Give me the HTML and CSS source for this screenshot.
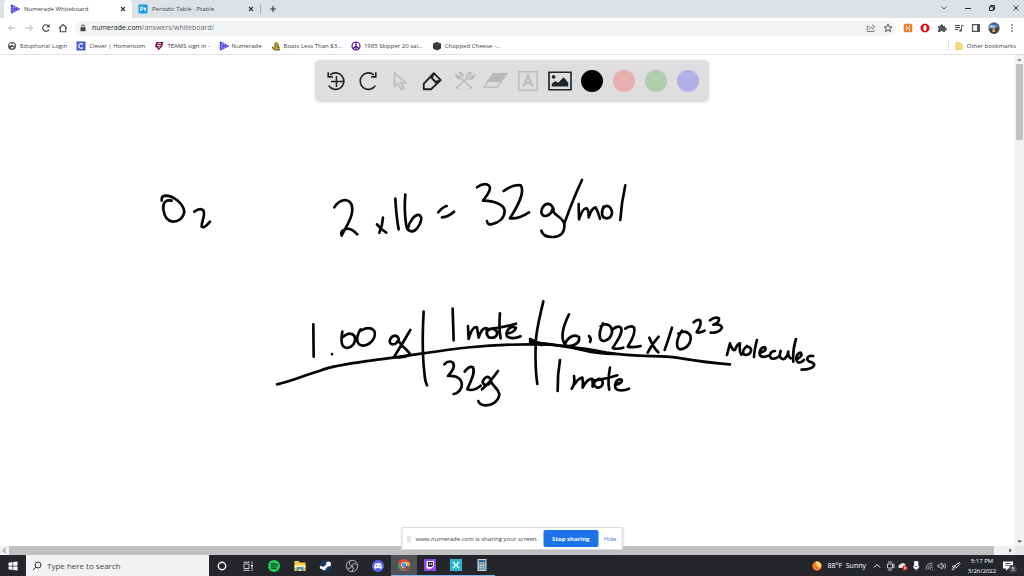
FILE: index.html
```html
<!DOCTYPE html>
<html lang="en">
<head>
<meta charset="utf-8">
<title>Numerade Whiteboard</title>
<link rel="stylesheet" href="styles.css">
</head>
<body>
<svg class="defs" aria-hidden="true">
  <symbol id="numerade" viewBox="0 0 10 10"><path d="M1.5 1v8M1.500 1l7.500 4-7.500 4M1.500 3.500l4 1.500-4 1.500" fill="#c3bff8" stroke="#4a43e0" stroke-width="1.500" stroke-dasharray="2 .5"/></symbol>
  <symbol id="close" viewBox="0 0 8 8"><path d="M2 2l4 4M6 2l-4 4" fill="none" stroke="#333" stroke-width="1.100"/></symbol>
</svg>

<header class="browser">
  <div class="tabs">
    <div class="tab active"><svg class="i10"><use href="#numerade"/></svg><span>Numerade Whiteboard</span><button class="icon" aria-label="Close tab"><svg class="i8"><use href="#close"/></svg></button></div>
    <div class="tab"><svg class="i10" viewBox="0 0 10 10"><rect x=".5" y=".5" width="9" height="9" rx="1" fill="#1296e8"/><path d="M2.800 7.500V3h1.200a1.200 1.200 0 0 1 0 2.500H2.800M7 3v4h1M6 4.500h2" fill="none" stroke="#fff"/></svg><span>Periodic Table - Ptable</span><button class="icon" aria-label="Close tab"><svg class="i8"><use href="#close"/></svg></button></div>
    <button class="icon new-tab" aria-label="New tab"><svg class="i8" viewBox="0 0 8 8"><path d="M4 1v6M1 4h6" stroke="#333" stroke-width="1.100"/></svg></button>
    <div class="window-buttons">
      <button class="icon" aria-label="Search tabs"><svg class="i8" viewBox="0 0 8 8"><path d="M1.500 2.500L4 5l2.500-2.500" fill="none" stroke="#555"/></svg></button>
      <button class="icon" aria-label="Minimize"><svg class="i8" viewBox="0 0 8 8"><path d="M1 4.500h6" stroke="#333"/></svg></button>
      <button class="icon" aria-label="Restore"><svg class="i8" viewBox="0 0 8 8"><path d="M2.500 2.500V1.500h4v4h-1M1.500 2.800h3.800v3.700H1.500z" fill="none" stroke="#222"/></svg></button>
      <button class="icon" aria-label="Close window"><svg class="i8" viewBox="0 0 8 8"><path d="M1.500 1.500l5 5M6.500 1.500l-5 5" stroke="#333"/></svg></button>
    </div>
  </div>

  <div class="nav">
    <button class="icon" aria-label="Back"><svg class="i10" viewBox="0 0 10 10"><path d="M8.500 5h-7M4.500 2l-3 3 3 3" fill="none" stroke="#b5b5b5"/></svg></button>
    <button class="icon" aria-label="Forward"><svg class="i10" viewBox="0 0 10 10"><path d="M1.500 5h7M5.500 2l3 3-3 3" fill="none" stroke="#b5b5b5"/></svg></button>
    <button class="icon" aria-label="Reload"><svg class="i10" viewBox="0 0 10 10"><path d="M8 6.500A3.300 3.300 0 1 1 7.600 3" fill="none" stroke="#444" stroke-width="1.200"/><path d="M8.600 1v3.500H5.300z" fill="#444"/></svg></button>
    <button class="icon" aria-label="Home"><svg class="i10" viewBox="0 0 10 10"><path d="M1 5.300L5 1.500l4 3.800M2.300 4.500v4.300h5.400V4.500" fill="none" stroke="#444" stroke-width="1.100"/></svg></button>
    <div class="address">
      <svg class="i8" viewBox="0 0 8 8"><rect x="1.500" y="3.200" width="5" height="4" rx=".5" fill="#444"/><path d="M2.700 3.500V2.200a1.300 1.300 0 0 1 2.600 0v1.300" fill="none" stroke="#444" stroke-width=".9"/></svg>
      <span class="url"><b>numerade.com</b>/answers/whiteboard/</span>
      <button class="icon" aria-label="Share"><svg class="i10" viewBox="0 0 10 10"><path d="M3.500 3.500H1.200v5h6.600V6.500M3 6.800Q3.500 4 6.500 3.800M6 1.600l2.800 2.200L6 6" fill="none" stroke="#666" stroke-width=".8"/></svg></button>
      <button class="icon" aria-label="Bookmark"><svg class="i10" viewBox="0 0 10 10"><path d="M5 1.200l1.100 2.600 2.800.2-2.100 1.800.7 2.800L5 7.100 2.500 8.600l.7-2.800L1.100 4l2.800-.2z" fill="none" stroke="#444" stroke-width=".9"/></svg></button>
    </div>
    <div class="extensions">
      <svg class="i10" viewBox="0 0 10 10"><rect x=".7" y=".7" width="8.600" height="8.600" rx="1.500" fill="#f47a2b"/><path d="M3.500 2.500v2l3 1.500v2M6.500 2.500v2M3.500 5.500v2" stroke="#fff" stroke-width=".9" fill="none"/></svg>
      <svg class="i10" viewBox="0 0 10 10"><path d="M3.200.7h3.600l2.500 2.500v3.600L6.800 9.300H3.200L.7 6.800V3.200z" fill="#dd1010"/><path d="M3.600 5V3h.8V2h1v.8h1V7L5.300 8H4.400L3 5.500z" fill="#fff"/></svg>
      <svg class="i10" viewBox="0 0 10 10"><path d="M1 3h2.500a1.300 1.300 0 1 1 2.500 0h2v2a1.300 1.300 0 1 1 0 2.400V9H5.800a1.200 1.200 0 0 0-2.400 0H1V6.800a1.200 1.200 0 0 0 0-2.300z" fill="#505359"/></svg>
      <svg class="i10" viewBox="0 0 10 10"><path d="M1 2.500h5M1 4.500h5M1 6.500h3M7.500 7.500V2.500h2" fill="none" stroke="#505359"/><circle cx="6.500" cy="7.500" r="1.200" fill="#505359"/></svg>
      <svg class="i10" viewBox="0 0 10 10"><path d="M1.500 1.700h7v6.600h-7z" fill="none" stroke="#505359" stroke-width="1.200"/><path d="M6 1.500h3v7H6z" fill="#505359"/></svg>
      <svg class="i12" viewBox="0 0 12 12"><circle cx="6" cy="6" r="5.700" fill="#4d6589"/><path d="M2 3h4l3 1-1 2H1z" fill="#8fb7e8"/><path d="M1 8l3-2 3 1 1-3 3 4-2 3-3 1-3-1z" fill="#4a4234"/><path d="M5 6l2 1v3H4z" fill="#c0a878"/></svg>
      <svg class="i10" viewBox="0 0 10 10"><path d="M5 1.300v1.500M5 4.300v1.500M5 7.300v1.500" stroke="#444" stroke-width="1.400"/></svg>
    </div>
  </div>

  <nav class="bookmarks">
    <a href="#"><svg class="i10" viewBox="0 0 10 10"><circle cx="5" cy="5" r="4" fill="#55585c"/><path d="M2 3l2-1 1 1.500-2 1.500zM6 2l2 2-1 1-2-1zM4 6h3L5 8.300z" fill="#fff"/></svg>Eduphoria! Login</a>
    <a href="#"><svg class="i10" viewBox="0 0 10 10"><path d="M.5.500h9v9h-9z" fill="#4454d8"/><path d="M6.800 3.500a2.300 2.300 0 1 0 0 3" fill="none" stroke="#fff" stroke-width="1.200"/></svg>Clever | Homeroom</a>
    <a href="#"><svg class="i10" viewBox="0 0 10 10"><path d="M2 1h7.500L8 6 4 9.500 3.500 7 1 6z" fill="#7b1848"/><path d="M3.500 2.500H7M3 4.500h3.500L4.500 7" stroke="#f5d5e2" fill="none"/></svg>TEAMS sign in -</a>
    <a href="#"><svg class="i10"><use href="#numerade"/></svg>Numerade</a>
    <a href="#"><svg class="i10" viewBox="0 0 10 10"><path d="M4 1h3v3l2 2v3H2L1 6l3-1z" fill="#c9a42b"/><path d="M1 6l3 3h5M4 2v4M7 3v4" stroke="#4b4935" stroke-width=".9" fill="none"/></svg>Boats Less Than $3...</a>
    <a href="#"><svg class="i10" viewBox="0 0 10 10"><circle cx="5" cy="5" r="4" fill="#fff" stroke="#57148c" stroke-width="1.200"/><path d="M5 1v8M5 5L2 7.800M5 5l3 2.800" stroke="#57148c" stroke-width="1.200"/></svg>1985 Skipper 20 sai...</a>
    <a href="#"><svg class="i10" viewBox="0 0 10 10"><path d="M1 2.500L5 1l4 1.500v5L5 9.500l-4-2z" fill="#333"/><path d="M1 2.500l4 1.500 4-1.500M5 4v5" stroke="#666" fill="none" stroke-width=".5"/></svg>Chopped Cheese -...</a>
    <a href="#" class="other"><svg class="i10" viewBox="0 0 10 10"><path d="M2 1.500h3l.5 1H8v6H2z" fill="#f8db76" stroke="#e5be42" stroke-width=".6"/></svg>Other bookmarks</a>
  </nav>
</header>

<main class="page">
  <svg class="ink" viewBox="0 55 1015 491" preserveAspectRatio="xMidYMin meet" role="img" aria-label="O2: 2 × 16 = 32 g/mol. 1.00 g, 1 mole over 32 g, 6.022 × 10^23 molecules over 1 mole">
    <g transform="translate(150 170) scale(.3333)">
      <path d="M35 92Q34 78 46 77C70 77 100 100 103 125C100 145 85 156 68 155C50 153 43 140 40 118C38 100 45 88 65 92"/>
      <path d="M133 125Q150 112 160 121C168 135 153 158 155 170Q162 177 180 155"/>
      <path d="M553 112Q565 92 585 90C612 92 610 125 600 148C592 168 582 182 575 197Q568 183 590 176Q605 175 622 193"/>
      <path d="M681 163Q694 180 709 188M699 143Q698 165 688 188M736 86Q739 140 746 178"/>
      <path d="M766 74Q762 120 768 160C770 190 792 188 802 174C812 160 820 146 810 136C796 128 778 155 774 174"/>
    </g>
    <g transform="translate(430 170) scale(.3333)">
      <path d="M25 127Q36 112 50 108M36 142Q55 141 72 125"/>
      <path d="M141 52Q155 40 170 43C192 50 172 75 159 92C195 92 222 105 224 122C224 145 205 158 185 163Q172 165 171 153"/>
      <path d="M221 63Q250 42 272 46C286 65 265 105 240 145Q265 148 297 127"/>
      <path d="M371 120C365 98 348 96 338 112C328 132 340 142 354 136Q366 128 367 118C372 138 398 140 403 162C405 190 390 200 370 201C350 202 338 196 334 182"/>
      <path d="M456 30Q430 85 404 158M446 102L447 148Q459 112 470 115Q477 120 476 142Q486 112 497 112Q504 125 510 146"/>
      <path d="M521 110C512 130 515 144 530 145C546 144 550 128 542 115C535 105 526 105 520 115M586 46Q574 100 571 150"/>
    </g>
    <g transform="translate(270 295) scale(.3333)">
      <path d="M21 268C70 258 105 240 150 227C200 208 270 202 330 193C480 175 590 148 780 148L840 149"/>
      <path d="M130 88L131 185M186 177v1"/>
      <path d="M217 110C212 140 214 157 230 159C250 158 260 138 253 122Q238 108 219 126M272 103C255 130 260 150 278 152C302 150 320 128 313 108Q300 92 274 106"/>
      <path d="M386 130C378 116 362 122 359 138C360 154 380 150 386 133C385 150 410 158 420 178Q400 190 372 186M421 105Q395 150 372 186"/>
      <path d="M461 50C457 120 457 180 463 230Q464 255 471 271M548 41L551 136"/>
      <path d="M594 93L596 132Q607 92 621 97L626 128Q636 96 650 100Q650 125 658 128C638 112 660 98 672 102C690 112 680 130 662 128M690 55Q686 100 692 130M650 103Q700 98 738 86M710 116Q735 112 738 98C720 90 705 110 711 124Q728 135 752 124"/>
      <path d="M820 19C806 80 797 110 797 150Q795 220 802 267M781 136Q800 143 815 150"/>
      <path d="M523 208Q535 195 548 202C558 215 545 230 534 243C565 240 578 255 575 275Q567 295 551 297M584 230Q598 212 609 217C618 235 598 265 592 283Q610 290 632 272"/>
      <path d="M660 250C652 240 640 250 638 262C646 278 660 268 662 257C667 275 686 278 688 300C684 320 665 332 645 331Q628 330 625 318M684 228Q660 262 636 283"/>
    </g>
    <g transform="translate(530 295) scale(.3333)">
      <path d="M0 140C60 150 150 155 230 173C320 188 390 180 440 188C500 198 550 205 600 208"/>
      <path d="M0 132L30 146Q110 152 160 166Q210 178 258 177"/>
      <path d="M117 58C96 100 92 135 108 152C128 156 152 144 147 126C128 112 106 136 104 153M177 123Q186 132 180 141"/>
      <path d="M219 85C204 115 207 137 222 138C242 134 250 112 244 98Q232 80 212 94M247 104Q262 91 272 97C282 110 262 137 248 159Q260 164 280 158M286 101Q300 90 312 97C318 112 304 138 293 155Q310 159 332 153"/>
      <path d="M358 128Q370 158 385 172M386 125Q365 148 353 173M426 98Q415 135 404 165M456 107C437 133 438 160 450 163C472 162 486 140 481 122Q470 102 445 116"/>
      <path d="M491 82Q504 70 511 77C515 90 506 103 500 112Q510 115 524 107M540 76Q555 64 567 70C568 80 560 86 550 89Q574 86 576 98C570 110 555 114 542 113"/>
      <path d="M600 145L591 180M600 147Q609 169 615 165Q622 145 630 145Q627 170 634 179M651 153C635 165 637 181 648 180C665 178 670 157 651 154M681 135Q673 165 672 186M689 173Q712 168 705 157C690 155 683 180 696 185Q704 187 715 182M735 168C720 168 716 184 724 190Q734 194 745 185M752 168C746 186 752 194 763 192Q773 185 775 170Q773 184 782 190M798 132Q787 170 790 200M802 192Q820 182 812 173C798 175 795 196 804 202Q812 205 822 195M850 183C830 180 828 194 838 200C862 204 857 222 815 224"/>
      <path d="M90 195Q82 240 83 288M132 243Q136 267 125 281Q144 248 157 248Q160 260 158 278Q172 250 188 252L188 275C195 252 210 245 218 260C220 278 200 284 193 270M240 218Q232 260 238 284M188 257Q220 254 262 241M255 270Q279 264 275 254C258 248 248 276 262 284Q278 289 297 281"/>
    </g>
  </svg>

  <div class="tools" role="toolbar" aria-label="Drawing tools">
    <button class="icon" aria-label="Undo"><svg viewBox="0 0 24 24"><path d="M5.500 5.500A9 9 0 1 1 4 17M3.500 2.500v5h5M12.500 6.500v12M6.500 12.500h15" fill="none" stroke="#222" stroke-width="1.700"/></svg></button>
    <button class="icon" aria-label="Redo"><svg viewBox="0 0 24 24"><path d="M18.500 5.500A9 9 0 1 0 20 17M20.500 2.500v5h-5" fill="none" stroke="#222" stroke-width="1.700"/></svg></button>
    <button class="icon" aria-label="Select"><svg viewBox="0 0 24 24"><path d="M6 3v15l4-3 3 6.500 3-1.500-3-6h5z" fill="none" stroke="#bcbcbc" stroke-width="1.700"/></svg></button>
    <button class="icon" aria-label="Pen"><svg viewBox="0 0 24 24"><path d="M3 21v-6L14 3.500 21.500 11 11 21zM10.500 7.500L17.500 15M14 3.500l-2 5.500 4 4 5.500-2" fill="none" stroke="#222" stroke-width="2" stroke-linejoin="round"/></svg></button>
    <button class="icon" aria-label="Tools"><svg viewBox="0 0 24 24"><path d="M8 8l12 12M16 8L4 20M3 5l3 3 3-3-2-2c4 0 5 4 2 6-3 1-6 0-6-4zM15 7c0-4 3-5 5-4l-2 3 2 2 3-2c0 4-4 5-6 3zM3 18l3 3M18 21l3-3" fill="none" stroke="#b8b8b8" stroke-width="1.500"/></svg></button>
    <button class="icon" aria-label="Eraser"><svg viewBox="0 0 24 24"><path d="M9 4h15l-8 9H1z" fill="#b9b9b9"/><path d="M9 4h15L13 19H-1z" fill="none" stroke="#bbb" stroke-width="1.500"/></svg></button>
    <button class="icon" aria-label="Text"><svg viewBox="0 0 24 24"><path d="M2 2h20v20H2z" fill="none" stroke="#bcbcbc" stroke-width="1.600"/><path d="M7 18l5-12 5 12M8.500 14h7" fill="none" stroke="#bcbcbc" stroke-width="2.400"/></svg></button>
    <button class="icon" aria-label="Image"><svg viewBox="0 0 24 24"><path d="M0 2.500h24v19H0z" fill="none" stroke="#20252a" stroke-width="1.800"/><circle cx="5" cy="7.500" r="2" fill="#20252a"/><path d="M3 18v-3l4-3 3 2 6-6 5 6v4z" fill="#20252a"/></svg></button>
    <button class="icon swatch black" aria-label="Black"></button>
    <button class="icon swatch red" aria-label="Red"></button>
    <button class="icon swatch green" aria-label="Green"></button>
    <button class="icon swatch blue" aria-label="Blue"></button>
  </div>

  <div class="vscroll"><svg class="arrow" viewBox="0 0 8 8"><path d="M2 5l2-2 2 2z" fill="#777"/></svg><div class="vtrack"><div class="thumb"></div></div><svg class="arrow" viewBox="0 0 8 8"><path d="M2 3l2 2 2-2z" fill="#444"/></svg></div>
  <div class="hscroll"><svg class="arrow" viewBox="0 0 8 8"><path d="M5 2L3 4l2 2" fill="none" stroke="#999"/></svg><div class="thumb"></div><svg class="arrow" viewBox="0 0 8 8"><path d="M3 2l2 2-2 2z" fill="#444"/></svg></div>
  <div class="corner"></div>

  <div class="sharing"><span class="grip"></span><span>www.numerade.com is sharing your screen.</span><button class="stop">Stop sharing</button><a href="#">Hide</a></div>
</main>

<footer class="taskbar">
  <button class="icon start" aria-label="Start"><svg class="i10" viewBox="0 0 10 10"><path d="M.5 1.800L4.500 1v3.700h-4zM5.200 1L9.500.500v4.200H5.200zM.5 5.400h4V9l-4-.7zM5.200 5.400h4.300v4.200L5.200 9z" fill="#fff"/></svg></button>
  <label class="search"><svg class="i10" viewBox="0 0 10 10"><circle cx="6" cy="4" r="3" fill="none" stroke="#333"/><path d="M4 6L1 9" stroke="#333"/></svg><input type="text" placeholder="Type here to search" aria-label="Search"></label>
  <div class="apps">
    <button class="icon" aria-label="Cortana"><svg viewBox="0 0 14 14"><circle cx="7" cy="7" r="3.700" fill="none" stroke="#fff" stroke-width="1.400"/></svg></button>
    <button class="icon" aria-label="Task view"><svg viewBox="0 0 14 14"><path d="M3 5h5v4.500H3zM3 3.500V2.500M8 3.500V2.500M3 12v-1M8 12v-1M3 3.200h5M3 11.300h5M11 2.500v3M11 8v4" fill="none" stroke="#ddd" stroke-width=".9"/><path d="M10 6h2v1.500h-2z" fill="#fff"/></svg></button>
    <button class="icon" aria-label="Spotify"><svg viewBox="0 0 14 14"><circle cx="7" cy="7" r="6" fill="#1fce5a"/><path d="M3.500 5.200q4-1 7.500.8M4 7.300q3.500-.8 6 .7M4.300 9.300q3-.6 5 .5" fill="none" stroke="#17351f" stroke-width="1.200"/></svg></button>
    <button class="icon" aria-label="File Explorer"><svg viewBox="0 0 14 14"><path d="M1.500 2h4l1 1.500h6V12h-11z" fill="#f8cf50"/><path d="M1.500 6h11v3h-11z" fill="#ffe691"/><path d="M3.500 8h7v4h-2v-2h-3v2h-2z" fill="#3b9bd0"/></svg></button>
    <button class="icon" aria-label="Steam"><svg viewBox="0 0 14 14"><circle cx="7" cy="7" r="6" fill="#133b65"/><path d="M1 8l4 1.500L9 5.500" fill="none" stroke="#fff" stroke-width="2.500"/><circle cx="9.500" cy="5" r="2.500" fill="#fff"/><circle cx="5" cy="9.500" r="1.800" fill="#fff"/></svg></button>
    <button class="icon" aria-label="OBS"><svg viewBox="0 0 14 14"><circle cx="7" cy="7" r="5.700" fill="#26272b" stroke="#bbb" stroke-width=".9"/><path d="M7 7Q3 6 5 2.500M7 7q1-4 4.500-1.500M7 7q3 3 0 5M7 7Q5 11 2.500 9" fill="none" stroke="#bbb"/></svg></button>
    <button class="icon" aria-label="Discord"><svg viewBox="0 0 14 14"><circle cx="7" cy="7" r="6" fill="#5765ec"/><path d="M4 4.500q3-1 6 0l1 4.500-2 1-.7-1H5.700L5 10 3 9z" fill="#fff"/><path d="M5.500 6.200v1.300M8.500 6.200v1.300" stroke="#5765ec" stroke-width="1.200"/></svg></button>
    <button class="icon open current" aria-label="Chrome"><svg viewBox="0 0 14 14"><circle cx="7" cy="7" r="6" fill="#e7483b"/><path d="M1.500 4.500L6 12.800A6 6 0 0 1 1.500 4.500z" fill="#33a853"/><path d="M7 4h5.200A6 6 0 0 1 7 13l2.500-4z" fill="#e0b33b"/><circle cx="7" cy="7" r="2.800" fill="#fff"/><circle cx="7" cy="7" r="2.200" fill="#438be9"/><circle cx="10.500" cy="10.500" r="3" fill="#765c50"/></svg></button>
    <button class="icon open" aria-label="Twitch"><svg viewBox="0 0 14 14"><path d="M1 1h12v12H1z" fill="#8e45ed"/><path d="M4 3h7v5L8.500 10.500H7L5.500 12v-1.500H3.500V4z" fill="#fff"/><path d="M5 4h5v3.500L9 8.700H5z" fill="#26153d"/><path d="M6.800 5v2M8.800 5v2" stroke="#fff"/></svg></button>
    <button class="icon open" aria-label="Drawing app"><svg viewBox="0 0 14 14"><path d="M1 1h12v12H1z" fill="#30b5c8"/><path d="M4 4l6 6M10 4l-6 6" stroke="#e8ffff" stroke-width="1.100"/></svg></button>
    <button class="icon open" aria-label="Calculator"><svg viewBox="0 0 14 14"><path d="M2.500 1h9v12h-9z" fill="#cbd4dc"/><path d="M3.500 2h7v2.500h-7z" fill="#306c95"/><path d="M4 6h1.500M6.300 6h1.500M8.700 6h1.500M4 8.500h1.500M6.300 8.500h1.500M4 11h1.500M6.300 11h1.500" stroke="#596775" stroke-width="1.500"/><path d="M8.500 7.500h2v4.500h-2z" fill="#42a2d0"/></svg></button>
  </div>
  <div class="tray">
    <span class="weather"><svg class="i10" viewBox="0 0 10 10"><circle cx="5" cy="5" r="4.700" fill="#f37b2c"/><path d="M4 .5a4.500 4.500 0 0 1 5 6Q4 7 4 .5" fill="#ffd36a"/></svg>88°F&nbsp; Sunny</span>
    <svg class="i10" viewBox="0 0 10 10"><path d="M2 6.500l3-3 3 3" fill="none" stroke="#fff"/></svg>
    <svg class="i10" viewBox="0 0 10 10"><path d="M3 1h4M2.500 3h5v4h-5zM7.500 4l1.500-1v4L7.500 6M3 9h4" fill="none" stroke="#ddd" stroke-width=".9"/></svg>
    <svg class="i10" viewBox="0 0 10 10"><path d="M1 7a2 2 0 0 1 1-3.500 3 3 0 0 1 5.500.5L9 7z" fill="#ddd"/><circle cx="7" cy="7" r="2.600" fill="#d9242c"/><path d="M6 6l2 2M8 6L6 8" stroke="#fff" stroke-width=".7"/></svg>
    <svg class="i10" viewBox="0 0 10 10"><path d="M3.500.500h3.500v5.500H3.500zM2.500 5q0 3 2.700 3t2.700-3M5.200 8v1.500" fill="#fff" stroke="#eee" stroke-width=".8"/></svg>
    <svg class="i10" viewBox="0 0 10 10"><path d="M2 8.500Q2 2 8.500 2M4 8.500Q4 4 8.500 4M6 8.500Q6 6 8.500 6M8 8.500h1" fill="none" stroke="#bbb" stroke-width=".9"/></svg>
    <svg class="i10" viewBox="0 0 10 10"><path d="M1 3.800h1.500L5 2v6L2.500 6.200H1zM6.200 3.500q1 1.500 0 3M7.700 2.300q2 2.700 0 5.400" fill="none" stroke="#ddd" stroke-width=".8"/></svg>
    <svg class="i12" viewBox="0 0 12 12"><path d="M2 7q3-3 3 0c0 4-5 3-2 1l5-5 1.500 1.500L6 8M9 2l1.500 1.500" fill="none" stroke="#ddd"/></svg>
    <time class="clock"><span>5:17 PM</span><span>3/26/2022</span></time>
    <span class="notice"><svg class="i12" viewBox="0 0 12 12"><path d="M1 1.500h10v7H6L4 11V8.500H1z" fill="#fff"/><path d="M3 3.500h6M3 5.500h6" stroke="#444" stroke-width=".8"/></svg><b>5</b></span>
  </div>
</footer>
</body>
</html>
```
FILE: styles.css
```css
* { box-sizing: border-box; }
body {
  margin: 0;
  height: 100vh;
  display: flex;
  flex-direction: column;
  overflow: hidden;
  background: #fff;
  color: #3c4043;
  font: 6px/10px "Open Sans", "Noto Sans", sans-serif;
}
button, input { font: inherit; color: inherit; border: 0; margin: 0; padding: 0; background: none; }
a { color: inherit; text-decoration: none; }
svg { display: block; flex: none; }
.defs { position: absolute; width: 0; height: 0; }
.icon { display: flex; align-items: center; justify-content: center; flex: none; }
.i8 { width: 8px; height: 8px; }
.i10 { width: 10px; height: 10px; }
.i12 { width: 12px; height: 12px; }

.tabs { display: flex; height: 18px; padding-left: 4px; background: #dee1e6; }
.tab { display: flex; align-items: center; gap: 4px; width: 128px; padding: 0 5px 0 6px; }
.tab span { flex: 1; white-space: nowrap; }
.tab.active { background: #fff; border-radius: 4px 4px 0 0; }
.new-tab { width: 24px; border-left: 1px solid #aaadb2; margin: 4px 0; }
.window-buttons { display: flex; align-items: center; gap: 16px; margin-left: auto; padding: 0 4px 3px 0; }

.nav { display: flex; align-items: center; height: 20px; padding: 0 7px; gap: 7px; }
.address { display: flex; flex: 1; align-items: center; gap: 7px; height: 15px; padding: 0 3px 0 4px; border-radius: 8px; background: #f1f3f4; }
.url { flex: 1; font-size: 7px; color: #6b6e72; margin-left: -2px; }
.url b { font-weight: 400; color: #222; }
.extensions { display: flex; align-items: center; gap: 7px; }

.bookmarks { display: flex; align-items: center; gap: 9px; height: 17px; padding: 0 8px 0 7px; border-bottom: 1px solid #e0e0e0; white-space: nowrap; }
.bookmarks a { display: flex; align-items: center; gap: 3px; }
.bookmarks .other { margin-left: auto; border-left: 1px solid #d5e1f5; padding-left: 5px; }

.page { position: relative; flex: 1; min-height: 0; display: grid; grid-template: 1fr 9px / 1fr 9px; }
.ink { width: 100%; height: 100%; min-height: 0; fill: none; stroke: #050505; stroke-width: 8; stroke-linecap: round; stroke-linejoin: round; }
.tools {
  position: absolute; top: 5px; left: 50%; transform: translateX(-50%);
  display: flex; align-items: center; gap: 10px; height: 42px; padding: 0 10px;
  border-radius: 5px; background: #dedede; box-shadow: 0 0 3px #ddd;
}
.tools .icon { width: 22px; height: 22px; }
.tools svg { width: 22px; height: 22px; overflow: visible; }
.swatch { border-radius: 50%; }
.black { background: #000; }
.red { background: #e8aeae; }
.green { background: #adcfad; }
.blue { background: #b1b1e5; }

.arrow { width: 9px; height: 9px; }
.vscroll { display: flex; flex-direction: column; background: #f1f1f1; }
.vtrack { flex: 1; padding: 0 1px; }
.thumb { background: #c1c1c1; }
.vtrack .thumb { height: 16%; }
.hscroll { display: flex; background: #f1f1f1; }
.hscroll .thumb { flex: 1; margin-right: 12px; }
.corner { background: #e6e6e6; }

.sharing {
  position: absolute; bottom: 5px; left: 50%; transform: translateX(-50%);
  display: flex; align-items: center; gap: 5px; height: 23px; padding: 0 5px;
  border: 1px solid #ddd; background: #fff; white-space: nowrap; box-shadow: 0 1px 2px #bbb;
}
.grip { width: 3px; height: 6px; border: 1px solid #ccc; border-width: 0 1px; }
.stop { height: 17px; padding: 0 9px; border-radius: 2px; background: #1a73e8; color: #fff; font-weight: 700; }
.sharing a { color: #3c7fe0; }

.taskbar { display: flex; height: 21px; background: #24262b; color: #fff; }
.start { width: 26px; }
.search { display: flex; align-items: center; gap: 5px; width: 183px; padding-left: 6px; background: #f2f2f2; color: #444; }
.search input { flex: 1; min-width: 0; font-size: 8px; outline: 0; }
.search input::placeholder { color: #444; opacity: 1; }
.apps { display: flex; }
.apps .icon { width: 26px; }
.apps svg { width: 14px; height: 14px; }
.open { border-bottom: 1px solid #76b9ed; }
.current { background: #515358; }
.tray { display: flex; align-items: center; gap: 3px; margin-left: auto; padding-right: 10px; }
.weather { display: flex; align-items: center; gap: 6px; margin-right: 3px; font-size: 7px; white-space: nowrap; }
.clock { display: flex; flex-direction: column; align-items: center; width: 34px; }
.notice { position: relative; }
.notice b { position: absolute; left: 7px; top: 5px; width: 8px; height: 8px; border-radius: 50%; background: #444; font: 6px/8px "Open Sans", sans-serif; text-align: center; }
```
